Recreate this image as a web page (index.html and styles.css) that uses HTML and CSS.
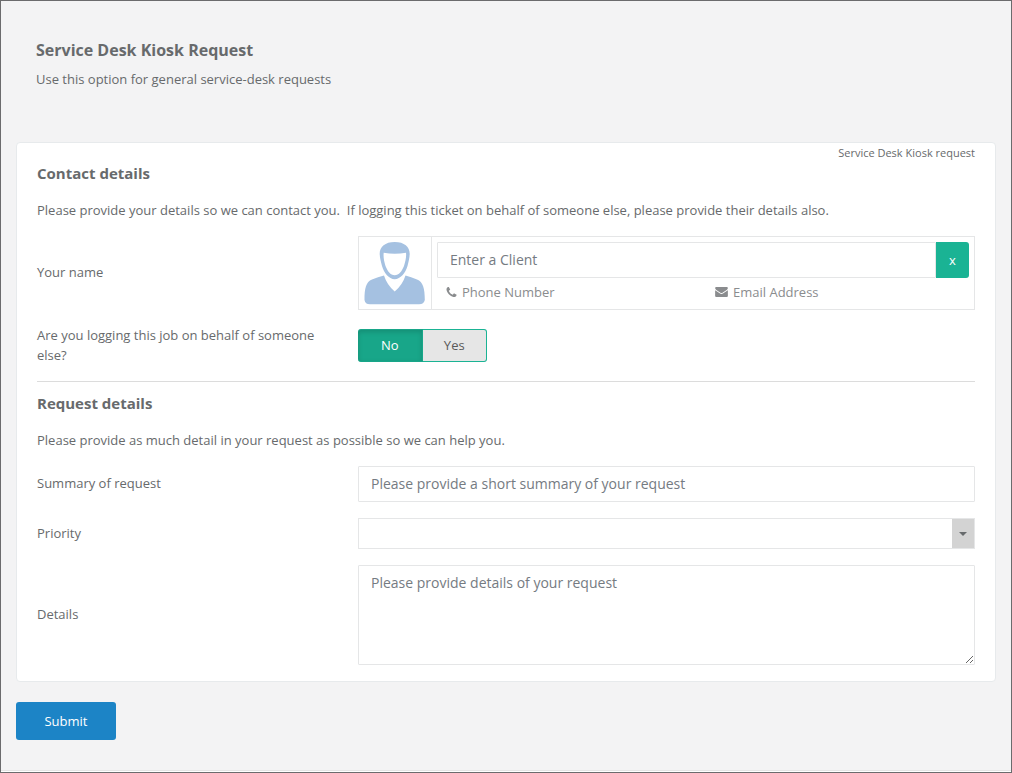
FILE: index.html
```html
<!DOCTYPE html>
<html lang="en">
<head>
<meta charset="utf-8">
<meta name="viewport" content="width=device-width, initial-scale=1">
<title>Service Desk Kiosk Request</title>
<link rel="stylesheet" href="styles.css">
</head>
<body>
<main class="page">
  <header class="page-header">
    <h1 class="page-title">Service Desk Kiosk Request</h1>
    <p class="page-subtitle">Use this option for general service-desk requests</p>
  </header>

  <form class="request-form">
    <div class="card">
      <div class="card-tag">Service Desk Kiosk request</div>

      <section class="section">
        <h2 class="section-title">Contact details</h2>
        <p class="section-intro">Please provide your details so we can contact you.&nbsp; If logging this ticket on behalf of someone else, please provide their details also.</p>

        <div class="rows rows-contact">
          <div class="row">
            <label class="row-label" for="client">Your name</label>
            <div class="client">
              <div class="client-avatar">
                <svg class="avatar" viewBox="0 0 62 62" aria-hidden="true">
                  <path fill="#a5c1e1" d="M0.500 58C0.500 46 2 40 8 37.500Q14 35 20 33.500Q23 43 30.700 49.500Q38.500 43 41.500 33.500Q47 35 53 37.500C59 40 60.800 46 60.800 58Q60 62.200 55 62.200H6Q1 62.200 0.500 58Z"/>
                  <path fill="#a5c1e1" fill-rule="evenodd" d="M30.700 0C21 0 15.500 5 15.700 12C15.800 16 17 20 18 24C20 31 25 37.200 30.700 37.200S41.500 31 43.500 24C44.500 20 45.600 16 45.700 12C45.900 5 40.500 0 30.700 0ZM19.700 10.700Q30.700 13 42 10.700C42.500 15 41.500 19 40 24C38 29 35 33.300 30.700 33.300S23.500 29 21.500 24C20 19 19.200 15 19.700 10.700Z"/>
                </svg>
              </div>
              <div class="client-body">
                <div class="input-group">
                  <input class="text-input" id="client" type="text" placeholder="Enter a Client">
                  <button class="clear-button" type="button" aria-label="Clear client">x</button>
                </div>
                <div class="client-info">
                  <div class="info-item">
                    <svg class="icon icon-phone" viewBox="0 0 1408 1408" aria-hidden="true"><path fill="currentColor" d="M1408 1112q0 27-10 70.500t-21 68.500q-21 50-122 106q-94 51-186 51q-27 0-53-3.500t-57.500-12.500t-47-14.500t-55.500-20.500t-49-18q-98-35-175-83q-127-79-264-216t-216-264q-48-77-83-175q-3-9-18-49t-20.500-55.500t-14.500-47t-12.500-57.500t-3.500-53q0-92 51-186q56-101 106-122q25-11 68.500-21t70.500-10q14 0 21 3q18 6 53 76q11 19 30 54t35 63.500t31 53.500q3 4 17.500 25t21.500 35.500t7 28.500q0 20-28.500 50t-62 55t-62 53t-28.500 46q0 9 5 22.500t8.500 20.500t14 24t11.500 19q76 137 174 235t235 174q2 1 19 11.500t24 14t20.500 8.500t22.500 5q18 0 46-28.500t53-62t55-62t50-28.500q14 0 28.500 7t35.500 21.500t25 17.500q25 15 53.500 31t63.500 35t54 30q70 35 76 53q3 7 3 21z"/></svg>
                    <span>Phone Number</span>
                  </div>
                  <div class="info-item">
                    <svg class="icon icon-mail" viewBox="0 0 14 11" aria-hidden="true"><path fill="currentColor" d="M1.200 0H12.800Q14 0 14 1.200Q14 2.300 12.700 3.200L8.500 6.100Q7 7.200 5.500 6.100L1.300 3.200Q0 2.300 0 1.200Q0 0 1.200 0ZM0 3.500L5 7Q7 8.400 9 7L14 3.500V9.800Q14 11 12.800 11H1.200Q0 11 0 9.800Z"/></svg>
                    <span>Email Address</span>
                  </div>
                </div>
              </div>
            </div>
          </div>

          <div class="row">
            <div class="row-question" id="behalf-label">Are you logging this job on behalf of someone else?</div>
            <div class="toggle" role="group" aria-labelledby="behalf-label">
              <button class="toggle-button is-active" type="button" aria-pressed="true">No</button>
              <button class="toggle-button" type="button" aria-pressed="false">Yes</button>
            </div>
          </div>
        </div>
      </section>

      <section class="section section-divided">
        <h2 class="section-title">Request details</h2>
        <p class="section-intro">Please provide as much detail in your request as possible so we can help you.</p>

        <div class="rows">
          <div class="row">
            <label class="row-label" for="summary">Summary of request</label>
            <input class="text-input" id="summary" type="text" placeholder="Please provide a short summary of your request">
          </div>
          <div class="row">
            <label class="row-label" for="priority">Priority</label>
            <div class="select-wrap">
              <select class="select" id="priority"><option></option></select>
              <span class="select-arrow"></span>
            </div>
          </div>
          <div class="row">
            <label class="row-label" for="details">Details</label>
            <textarea class="text-input text-area" id="details" placeholder="Please provide details of your request"></textarea>
          </div>
        </div>
      </section>
    </div>

    <button class="submit-button" type="submit">Submit</button>
  </form>
</main>
</body>
</html>
```

FILE: styles.css
```css
* {
  box-sizing: border-box;
}

body {
  margin: 0;
  background: #fff;
  color: #676a6c;
  font: 13px/20px "Open Sans", sans-serif;
}

h1,
h2,
p {
  margin: 0;
}

button,
input,
select,
textarea {
  margin: 0;
  color: inherit;
  font: inherit;
}

.page {
  min-height: 100vh;
  padding: 0 15px 30px;
  border: 1px solid #6b6b6d;
  background: #f3f3f4;
  box-shadow: inset 0 -1px #fff, inset 0 -2px #e5e5e5;
}

.page-header {
  padding: 37px 20px 53px;
}

.page-title {
  margin-bottom: 7px;
  font-size: 16px;
  line-height: 24px;
  font-weight: 700;
}

.card {
  margin-bottom: 20px;
  padding: 0 20px 16px;
  border: 1px solid #e7eaec;
  border-radius: 4px;
  background: #fff;
}

.card-tag {
  font-size: 11px;
  text-align: right;
}

.section-divided {
  margin-top: 16px;
  padding-top: 11px;
  border-top: 1px solid #dcdcdc;
}

.section-title {
  margin-bottom: 17px;
  font-size: 15px;
  line-height: 20px;
  font-weight: 700;
}

.section-intro {
  margin-bottom: 16px;
}

.rows {
  display: flex;
  flex-direction: column;
  gap: 16px;
}

.rows-contact {
  gap: 15px;
}

.row {
  display: grid;
  grid-template-columns: 321fr 617fr;
  align-items: center;
}

.row-label {
  padding: 0 30px 2px 0;
}

.row-question {
  padding-right: 30px;
}

.text-input {
  width: 100%;
  height: 36px;
  padding: 5px 12px 7px;
  border: 1px solid #e5e6e7;
  border-radius: 1px;
  background: #fff;
  font-size: 14px;
}

.text-input::placeholder {
  color: #757b82;
  opacity: 1;
}

.text-area {
  display: block;
  height: 100px;
  padding: 7px 12px;
  resize: both;
}

.client {
  display: flex;
  border: 1px solid #e5e6e7;
}

.client-avatar {
  display: flex;
  flex: none;
  padding: 5px;
  border-right: 1px solid #e5e6e7;
}

.avatar {
  width: 62px;
  height: 62px;
  overflow: visible;
}

.client-body {
  flex: 1;
  min-width: 0;
  padding: 5px;
}

.input-group {
  display: flex;
}

.clear-button {
  flex: none;
  width: 33px;
  border: 0;
  border-radius: 0 3px 3px 0;
  background: #1ab394;
  color: #fff;
}

.client-info {
  display: grid;
  grid-template-columns: 1fr 1fr;
  gap: 15px;
  padding: 4px 0 0 9px;
  color: #8a8c8e;
}

.info-item {
  display: flex;
  align-items: center;
  gap: 5px;
}

.icon {
  flex: none;
  height: 10px;
}

.icon-phone {
  width: 11px;
}

.icon-mail {
  width: 13px;
}

.toggle {
  display: flex;
  width: 129px;
  height: 33px;
}

.toggle-button {
  flex: 1;
  padding: 0;
  border: 1px solid #1ab394;
  border-left: 0;
  border-radius: 0 3px 3px 0;
  background: #e6e6e6;
  color: #5a5a5a;
}

.toggle-button.is-active {
  border-color: #18a689;
  border-radius: 3px 0 0 3px;
  background: #18a689;
  box-shadow: inset 0 2px 5px rgba(0, 0, 0, 0.15);
  color: #fff;
}

.select-wrap {
  position: relative;
}

.select {
  display: block;
  width: 100%;
  height: 31px;
  padding: 0 34px 0 12px;
  border: 1px solid #e5e6e7;
  border-radius: 0;
  background: #fff;
  appearance: none;
}

.select-arrow {
  position: absolute;
  top: 1px;
  right: 1px;
  bottom: 1px;
  display: grid;
  place-items: center;
  width: 22px;
  background: #d3d3d3;
  pointer-events: none;
}

.select-arrow::before {
  content: "";
  border: 4px solid transparent;
  border-top-color: #676a6c;
  border-bottom: 0;
}

.submit-button {
  display: block;
  width: 100px;
  height: 38px;
  padding: 0;
  border: 0;
  border-radius: 3px;
  background: #1c84c6;
  color: #fff;
}
```
